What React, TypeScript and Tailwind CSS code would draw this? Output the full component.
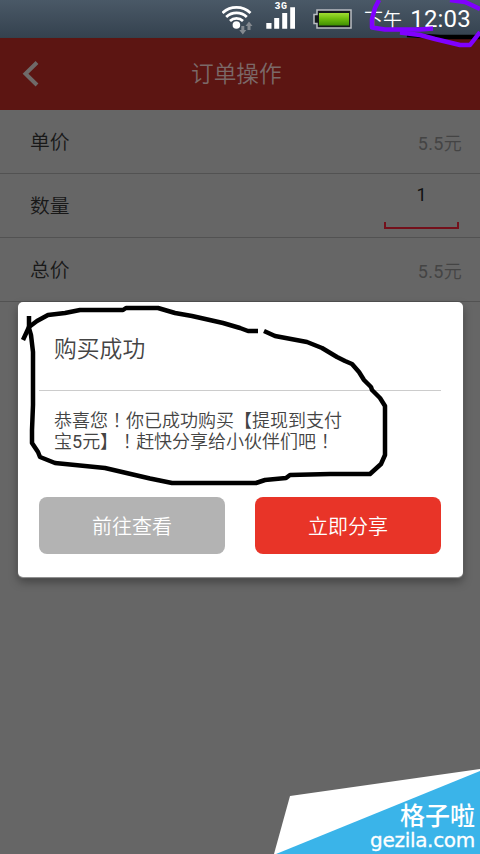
import React from 'react';

interface OrderRowProps {
    label: string;
    children: React.ReactNode;
}

const OrderRow: React.FC<OrderRowProps> = ({ label, children }) => (
    <div className="flex h-16 items-center justify-between border-b border-[#525252] pl-[30px] pr-[18px]">
        <span className="pt-[2px] text-[19.800px] font-[350] leading-[30px] text-[#181818]">{label}</span>
        {children}
    </div>
);

const Price = () => (
    <span className="pt-[3px] text-[18px] tracking-[0.3px] text-[#444]">5.5<span className="font-[350]">元</span></span>
);

const WifiIcon = () => (
    <svg width="34" height="36" viewBox="0 0 34 36" fill="none">
        <g stroke="#fff" strokeWidth="2.800">
            <path d="M0.500 13A20.500 20.500 0 0 1 28.500 13" />
            <path d="M4.200 17A15 15 0 0 1 24.800 17" />
            <path d="M8 21A9.500 9.500 0 0 1 21 21" />
        </g>
        <circle cx="14.400" cy="25" r="3.800" fill="#fff" />
        <path d="M19.300 26h3v4h2l-3.500 4.500-3.500-4.500h2zM25.500 30v-4h-2l3.500-4.500 3.500 4.500h-2v4z" fill="#84898f" />
    </svg>
);

const SignalIcon = () => (
    <svg width="30" height="30" viewBox="0 0 30 30" fill="#fff">
        <text x="8.500" y="9.300" fontSize="10" letterSpacing="0.4" fontWeight="700" fontFamily="Liberation Mono, monospace">3G</text>
        <path d="M0.300 23h5.200v5.700h-5.200zM8.200 18h5v10.700h-5zM16.200 13h5v15.700h-5zM24.200 7.300h4.800v21.400h-4.800z" />
    </svg>
);

const BatteryIcon = () => (
    <svg width="40" height="20" viewBox="0 0 40 20">
        <defs>
            <linearGradient id="charge" x1="0" y1="0" x2="0" y2="1">
                <stop offset="0" stopColor="#a0dd32" />
                <stop offset="0.45" stopColor="#6fbe0e" />
                <stop offset="1" stopColor="#3f8f02" />
            </linearGradient>
        </defs>
        <path d="M4 1h34v18h-34v-4.500h-3v-9h3z" fill="#15191c" stroke="#b9bdc2" strokeWidth="1.500" />
        <path d="M6 4h30v12.500h-30z" fill="url(#charge)" />
    </svg>
);

const StatusBar = () => (
    <div className="flex h-[38px] shrink-0 justify-end border-b border-[#35414b] bg-linear-to-b from-[#4a5967] to-[#35424f] pr-[9px]">
        <div className="mr-[10px]"><WifiIcon /></div>
        <div className="mr-[17px]"><SignalIcon /></div>
        <div className="mr-[11px] pt-[9px]"><BatteryIcon /></div>
        <div className="flex w-[107px] items-baseline justify-between whitespace-nowrap pt-px text-white">
            <span className="text-[19px] font-[350] leading-[38px]">下午</span>
            <span className="font-[Roboto] text-[24px] leading-[37px] tracking-[0.2px]">12:03</span>
        </div>
    </div>
);

const Mark = () => <span className="font-['Noto_Sans_CJK_TC'] leading-none">！</span>;

const SuccessDialog = () => (
    <div className="absolute left-[18px] top-[302px] h-[275px] w-[445px] rounded-[5px] bg-white pl-[21px] pr-[22px] text-[#444] shadow-[0_1px_1px_#999,0_5px_10px_rgba(0,0,0,0.35)]">
        <h2 className="h-[89px] border-b border-[#ccc] pl-[15px] pt-[31px] text-[22.800px] font-[350] leading-[33px]">购买成功</h2>
        <p className="mt-[19px] whitespace-nowrap pl-[15px] text-[18px] font-[350] leading-[21px]">
            <span className="block h-[21px]">恭喜您<Mark />你已成功购买【提现到支付</span>
            <span className="block h-[21px]">宝<span className="font-[Roboto] font-normal">5</span>元】<Mark />赶快分享给小伙伴们吧<Mark /></span>
        </p>
        <div className="mt-[45px] flex gap-[30px] text-[20px] text-white">
            <button className="h-[57px] flex-1 rounded-lg bg-[#b3b3b3] pt-[2px] font-[350]">前往查看</button>
            <button className="h-[57px] flex-1 rounded-lg bg-[#e83428] pt-[2px] font-[350]">立即分享</button>
        </div>
    </div>
);

const Scribbles = () => (
    <svg className="pointer-events-none absolute inset-0" width="480" height="854" viewBox="0 0 480 854" fill="none" strokeWidth="4.500" strokeLinejoin="round">
        <g stroke="#000">
            <path d="M23 340L29 327L37 321L48 315L65 313L80 310L123 310L126 308L158 308L175 313L192 316L223 323L240 328L248 331H258" />
            <path d="M264 331L275 336L307 342L322 348L337 357L345 361L352 364L359 372L364 380L371 387L372 390L380 398L385 406V455L381 464L370 474L330 474L290 475L286 478L265 480L256 483H172L150 478.500L105 468L55 463L40 457L38 452L32 443V430L33 405V352L31 335L29 328V316" />
            <path d="M407 35L440 37H480" />
        </g>
        <g stroke="#8000ff">
            <path d="M379 0L375 8L372 19V27.500L385 29.500H420L433 28.500" />
            <path d="M400 32.500L420 35L435 39L460 45H470L480 32M450 0L465 2L480 9" />
        </g>
    </svg>
);

const Watermark = () => (
    <div className="absolute bottom-0 right-0 h-[85px] w-[206px]">
        <svg className="absolute inset-0" width="206" height="85" viewBox="0 0 206 85">
            <path d="M0 85L16 27L206 0V85z" fill="#fff" />
            <path d="M2 85L206 2V85z" fill="#3ab4e9" />
        </svg>
        <div className="relative flex flex-col items-end pr-[5px] pt-[34px] text-white">
            <span className="text-[25px] font-medium leading-[28px]">格子啦</span>
            <span className="font-['DejaVu_Sans'] text-[20px] leading-[19px] tracking-[-0.3px] [-webkit-text-stroke:0.3px_white]">gezila.com</span>
        </div>
    </div>
);

const App: React.FC = () => (
    <div className="relative flex h-[854px] w-[480px] flex-col overflow-hidden bg-[#666] font-['Roboto','Noto_Sans_CJK_SC',sans-serif]">
        <StatusBar />
        <header className="flex h-[72px] shrink-0 items-center bg-[#5c1512]">
            <svg className="ml-[22px]" width="17" height="26" viewBox="0 0 17 26" fill="none" stroke="#6f6a69" strokeWidth="4">
                <path d="M15 1.500L3.500 12.700L15 24" />
            </svg>
            <h1 className="ml-[152px] pt-[3px] text-[22.700px] font-[350] text-[#7b6968]">订单操作</h1>
        </header>
        <main>
            <OrderRow label="单价"><Price /></OrderRow>
            <OrderRow label="数量">
                <div className="relative mr-[3px] h-full w-[75px] pt-[7px] text-center text-[18px] leading-[28px] text-[#111]">
                    1
                    <div className="absolute bottom-2 left-0 h-[7px] w-full border-2 border-t-0 border-[#74101b]" />
                </div>
            </OrderRow>
            <OrderRow label="总价"><Price /></OrderRow>
        </main>
        <SuccessDialog />
        <Watermark />
        <Scribbles />
    </div>
);

export default App;
